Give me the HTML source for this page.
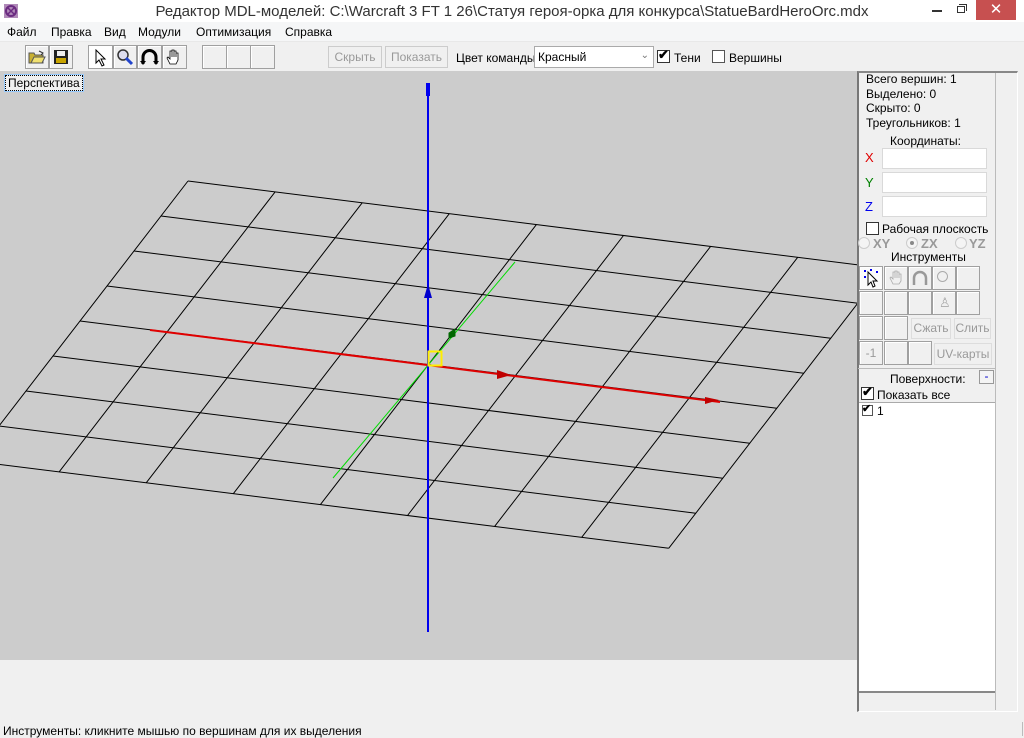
<!DOCTYPE html>
<html><head><meta charset="utf-8"><style>
*{margin:0;padding:0;box-sizing:border-box}
body{width:1024px;height:738px;overflow:hidden;background:#f0f0f0;font-family:"Liberation Sans",sans-serif;font-size:12px;color:#000;position:relative}
.a{position:absolute}
.btn{position:absolute;border:1px solid #adadad;background:#f0f0f0;color:#999;text-align:center;font-size:12px}
.tb{position:absolute;border:1px solid #a0a0a0;background:#f0f0f0;box-shadow:inset 1px 1px #fff}
.inp{position:absolute;background:#fff;border:1px solid #d9d9d9}
.cb{position:absolute;width:13px;height:13px;border:1px solid #333;background:#fff}
</style></head><body>
<div class="a" style="left:0;top:0;width:1024px;height:22px;background:#fff"></div>
<svg class="a" style="left:3px;top:3px" width="16" height="16"><rect x="1" y="1" width="14" height="14" fill="#b08ab8"/><circle cx="8" cy="8" r="5" fill="none" stroke="#6a2a80" stroke-width="2"/><path d="M4 4L12 12M12 4L4 12" stroke="#6a2a80" stroke-width="1.5"/></svg>
<div class="a" style="left:0;top:3px;width:1024px;text-align:center;font-size:15px;color:#333">Редактор MDL-моделей: C:\Warcraft 3 FT 1 26\Статуя героя-орка для конкурса\StatueBardHeroOrc.mdx</div>
<div class="a" style="left:932px;top:10px;width:10px;height:2px;background:#333"></div>
<div class="a" style="left:957px;top:6px;width:8px;height:7px;border:1px solid #333"></div>
<div class="a" style="left:959px;top:4px;width:8px;height:7px;border-top:1px solid #333;border-right:1px solid #333"></div>
<div class="a" style="left:976px;top:0;width:40px;height:20px;background:#c75050;color:#fff;text-align:center;font-size:15px;line-height:20px">✕</div>
<div class="a" style="left:0;top:22px;width:1024px;height:20px;background:#f5f6f7;border-bottom:1px solid #e8e8e8"></div>
<div class="a" style="left:7px;top:25px">Файл</div>
<div class="a" style="left:51px;top:25px">Правка</div>
<div class="a" style="left:104px;top:25px">Вид</div>
<div class="a" style="left:138px;top:25px">Модули</div>
<div class="a" style="left:196px;top:25px">Оптимизация</div>
<div class="a" style="left:285px;top:25px">Справка</div>
<div class="tb" style="left:25px;top:45px;width:24px;height:24px"></div>
<svg class="a" style="left:28px;top:49px" width="18" height="16"><path d="M1 4h5l1 2h8v8H1z" fill="#c8b030" stroke="#555"/><path d="M3 14l3-6h11l-3 6z" fill="#f0e070" stroke="#555"/><path d="M11 2l4 2-2 2" fill="none" stroke="#333"/></svg>
<div class="tb" style="left:49px;top:45px;width:24px;height:24px"></div>
<svg class="a" style="left:53px;top:49px" width="16" height="16"><rect x="1" y="1" width="14" height="14" fill="#222"/><rect x="4" y="2" width="8" height="5" fill="#eee"/><rect x="3" y="9" width="10" height="5" fill="#c8a400"/></svg>
<div class="tb" style="left:88px;top:45px;width:25px;height:24px;background:#fff"></div>
<svg class="a" style="left:95px;top:49px" width="14" height="18"><path d="M1 1v13l3-3 3 6 2-1-3-6h4z" fill="#fff" stroke="#000"/></svg>
<div class="tb" style="left:113px;top:45px;width:24px;height:24px"></div>
<svg class="a" style="left:116px;top:48px" width="18" height="18"><circle cx="7" cy="7" r="5" fill="#dde" stroke="#333" stroke-width="1.5"/><path d="M10 10l6 6" stroke="#2244cc" stroke-width="3"/></svg>
<div class="tb" style="left:137px;top:45px;width:25px;height:24px"></div>
<svg class="a" style="left:140px;top:48px" width="19" height="18"><path d="M3 16V9a6.5 6.5 0 0 1 13 0v7" fill="none" stroke="#000" stroke-width="3"/><path d="M0 13l3 4 3-4z M13 13l3 4 3-4z"/></svg>
<div class="tb" style="left:162px;top:45px;width:25px;height:24px"></div>
<svg class="a" style="left:165px;top:48px" width="18" height="18"><path d="M5 16l-3-6 1-1 2 2V3l2 0v6V2h2v7V3h2v6V5h2v7l-2 4z" fill="#fff" stroke="#000" stroke-width="0.8"/></svg>
<div class="tb" style="left:202px;top:45px;width:25px;height:24px"></div>
<div class="tb" style="left:226px;top:45px;width:25px;height:24px"></div>
<div class="tb" style="left:250px;top:45px;width:25px;height:24px"></div>
<div class="btn" style="left:328px;top:46px;width:54px;height:22px;line-height:20px;border-color:#ccc">Скрыть</div>
<div class="btn" style="left:385px;top:46px;width:63px;height:22px;line-height:20px;border-color:#ccc">Показать</div>
<div class="a" style="left:456px;top:51px">Цвет команды:</div>
<div class="inp" style="left:534px;top:46px;width:120px;height:22px;border-color:#aaa;padding:3px 3px">Красный<span style="position:absolute;right:4px;top:3px;color:#777;font-size:10px">⌄</span></div>
<div class="cb" style="left:657px;top:50px"></div>
<div class="a" style="left:658px;top:47px;font-size:13px;font-weight:bold">✔</div>
<div class="a" style="left:674px;top:51px">Тени</div>
<div class="cb" style="left:712px;top:50px;border-color:#555"></div>
<div class="a" style="left:729px;top:51px">Вершины</div>
<svg class="a" style="left:0;top:71px" width="857" height="589" viewBox="0 71 857 589">
<rect x="0" y="71" width="857" height="589" fill="#cccccc"/>
<g stroke="#000" stroke-width="1" fill="none">
<path d="M188 181L884.8 268.2M161 216L857.8 303.2M134 251L830.8 338.2M107 286L803.8 373.2M80 321L776.8 408.2M53 356L749.8 443.2M26 391L722.8 478.2M-1 426L695.8 513.2M-28 461L668.8 548.2"/>
<path d="M188 181L-28 461M275.1 191.9L59.1 471.9M362.2 202.8L146.2 482.8M449.3 213.7L233.3 493.7M536.4 224.6L320.4 504.6M623.5 235.5L407.5 515.5M710.6 246.4L494.6 526.4M797.7 257.3L581.7 537.3M884.8 268.2L668.8 548.2"/>
</g>
<path d="M515 262L333 478" stroke="#00dd00" stroke-width="1"/>
<path d="M449 333l6-4 0 7-6 2z" fill="#006600" stroke="#006600"/>
<path d="M150 330L720 402" stroke="#e00000" stroke-width="2"/>
<path d="M497 370l14 5-14 4z" fill="#c00000"/>
<path d="M705 397l14 3-14 4z" fill="#c00000"/>
<path d="M428 83V632" stroke="#0000ee" stroke-width="2"/>
<rect x="426" y="83" width="4" height="13" fill="#0000ee"/>
<path d="M428 284l-4 14h8z" fill="#0000cc"/>
<rect x="428.5" y="351.5" width="13" height="14" fill="none" stroke="#ffee00" stroke-width="2"/>
</svg>
<div class="a" style="left:5px;top:75px;border:1px dotted #000;background:#f0f0f0;padding:0 2px;font-size:12px;line-height:14px;outline:1px solid #9cf">Перспектива</div>
<div class="a" style="left:857px;top:71px;width:161px;height:641px;border:1px solid #fff;border-left:2px solid #777;border-top:2px solid #888;background:#f0f0f0"></div>
<div class="a" style="left:995px;top:73px;width:1px;height:637px;background:#bbb"></div>
<div class="a" style="left:866px;top:72px;line-height:14.5px">Всего вершин: 1<br>Выделено: 0<br>Скрыто: 0<br>Треугольников: 1</div>
<div class="a" style="left:890px;top:134px">Координаты:</div>
<div class="a" style="left:865px;top:150px;color:#e00000;font-size:13px">X</div>
<div class="a" style="left:865px;top:175px;color:#008000;font-size:13px">Y</div>
<div class="a" style="left:865px;top:199px;color:#0000ee;font-size:13px">Z</div>
<div class="inp" style="left:882px;top:148px;width:105px;height:21px"></div>
<div class="inp" style="left:882px;top:172px;width:105px;height:21px"></div>
<div class="inp" style="left:882px;top:196px;width:105px;height:21px"></div>
<div class="cb" style="left:866px;top:222px"></div>
<div class="a" style="left:882px;top:222px">Рабочая плоскость</div>
<div class="a" style="left:858px;top:237px;width:12px;height:12px;border:1px solid #ccc;border-radius:50%;background:#f4f4f4"></div>
<div class="a" style="left:873px;top:236px;color:#999;font-size:13px;font-weight:bold">XY</div>
<div class="a" style="left:906px;top:237px;width:12px;height:12px;border:1px solid #ccc;border-radius:50%;background:#f4f4f4"></div>
<div class="a" style="left:910px;top:241px;width:4px;height:4px;border-radius:50%;background:#888"></div>
<div class="a" style="left:921px;top:236px;color:#999;font-size:13px;font-weight:bold">ZX</div>
<div class="a" style="left:955px;top:237px;width:12px;height:12px;border:1px solid #ccc;border-radius:50%;background:#f4f4f4"></div>
<div class="a" style="left:969px;top:236px;color:#999;font-size:13px;font-weight:bold">YZ</div>
<div class="a" style="left:891px;top:250px">Инструменты</div>
<div class="tb" style="left:859px;top:266px;width:24px;height:24px;background:#fbfbfb"></div>
<svg class="a" style="left:862px;top:268px" width="20" height="20"><path d="M6 4v13l3-3 2 5 2-1-2-5h4z" fill="#fff" stroke="#000"/><g fill="#0000ee"><rect x="2" y="2" width="2" height="2"/><rect x="8" y="1" width="2" height="2"/><rect x="14" y="3" width="2" height="2"/><rect x="2" y="8" width="2" height="2"/></g></svg>
<div class="tb" style="left:884px;top:266px;width:24px;height:24px"></div>
<svg class="a" style="left:888px;top:269px" width="17" height="17"><path d="M5 15l-3-6 1-1 2 2V3h2v6V2h2v7V3h2v6V5h2v7l-2 3z" fill="none" stroke="#aaa" stroke-width="0.8"/></svg>
<div class="tb" style="left:908px;top:266px;width:24px;height:24px"></div>
<svg class="a" style="left:911px;top:269px" width="18" height="18"><path d="M3 16V9a6 6 0 0 1 12 0v7" fill="none" stroke="#999" stroke-width="2.5"/></svg>
<div class="tb" style="left:932px;top:266px;width:24px;height:24px"></div>
<div class="a" style="left:937px;top:271px;width:11px;height:11px;border:1px solid #aaa;border-radius:50%"></div>
<div class="tb" style="left:956px;top:266px;width:24px;height:24px"></div>
<div class="tb" style="left:859px;top:291px;width:24px;height:24px"></div>
<div class="tb" style="left:884px;top:291px;width:24px;height:24px"></div>
<div class="tb" style="left:908px;top:291px;width:24px;height:24px"></div>
<div class="tb" style="left:932px;top:291px;width:24px;height:24px"></div>
<div class="a" style="left:939px;top:295px;color:#aaa;font-size:13px">♙</div>
<div class="tb" style="left:956px;top:291px;width:24px;height:24px"></div>
<div class="tb" style="left:859px;top:316px;width:24px;height:24px"></div>
<div class="tb" style="left:884px;top:316px;width:24px;height:24px"></div>
<div class="btn" style="left:911px;top:318px;width:40px;height:21px;line-height:19px;border-color:#ddd">Сжать</div>
<div class="btn" style="left:954px;top:318px;width:37px;height:21px;line-height:19px;border-color:#ddd">Слить</div>
<div class="tb" style="left:859px;top:341px;width:24px;height:24px;color:#999;text-align:center;line-height:22px">-1</div>
<div class="tb" style="left:884px;top:341px;width:24px;height:24px"></div>
<div class="tb" style="left:908px;top:341px;width:24px;height:24px"></div>
<div class="btn" style="left:934px;top:343px;width:58px;height:22px;line-height:20px;border-color:#ddd">UV-карты</div>
<div class="a" style="left:858px;top:368px;width:137px;height:1px;background:#bbb"></div>
<div class="a" style="left:890px;top:372px">Поверхности:</div>
<div class="a" style="left:979px;top:370px;width:15px;height:14px;border:1px solid #999;background:#f4f4f4;color:#0000cc;text-align:center;line-height:10px">-</div>
<div class="cb" style="left:861px;top:387px"></div>
<div class="a" style="left:862px;top:384px;font-size:13px;font-weight:bold">✔</div>
<div class="a" style="left:877px;top:388px">Показать все</div>
<div class="a" style="left:859px;top:402px;width:136px;height:291px;background:#fff;border-top:1px solid #aaa;border-bottom:2px solid #888"></div>
<div class="a" style="left:862px;top:405px;width:11px;height:11px;border:1px solid #555;background:#fff"></div>
<div class="a" style="left:862px;top:402px;font-size:11px;font-weight:bold">✔</div>
<div class="a" style="left:877px;top:404px">1</div>
<div class="a" style="left:3px;top:724px">Инструменты: кликните мышью по вершинам для их выделения</div>
<div class="a" style="left:1022px;top:722px;width:1px;height:14px;background:#bbb"></div>
</body></html>
